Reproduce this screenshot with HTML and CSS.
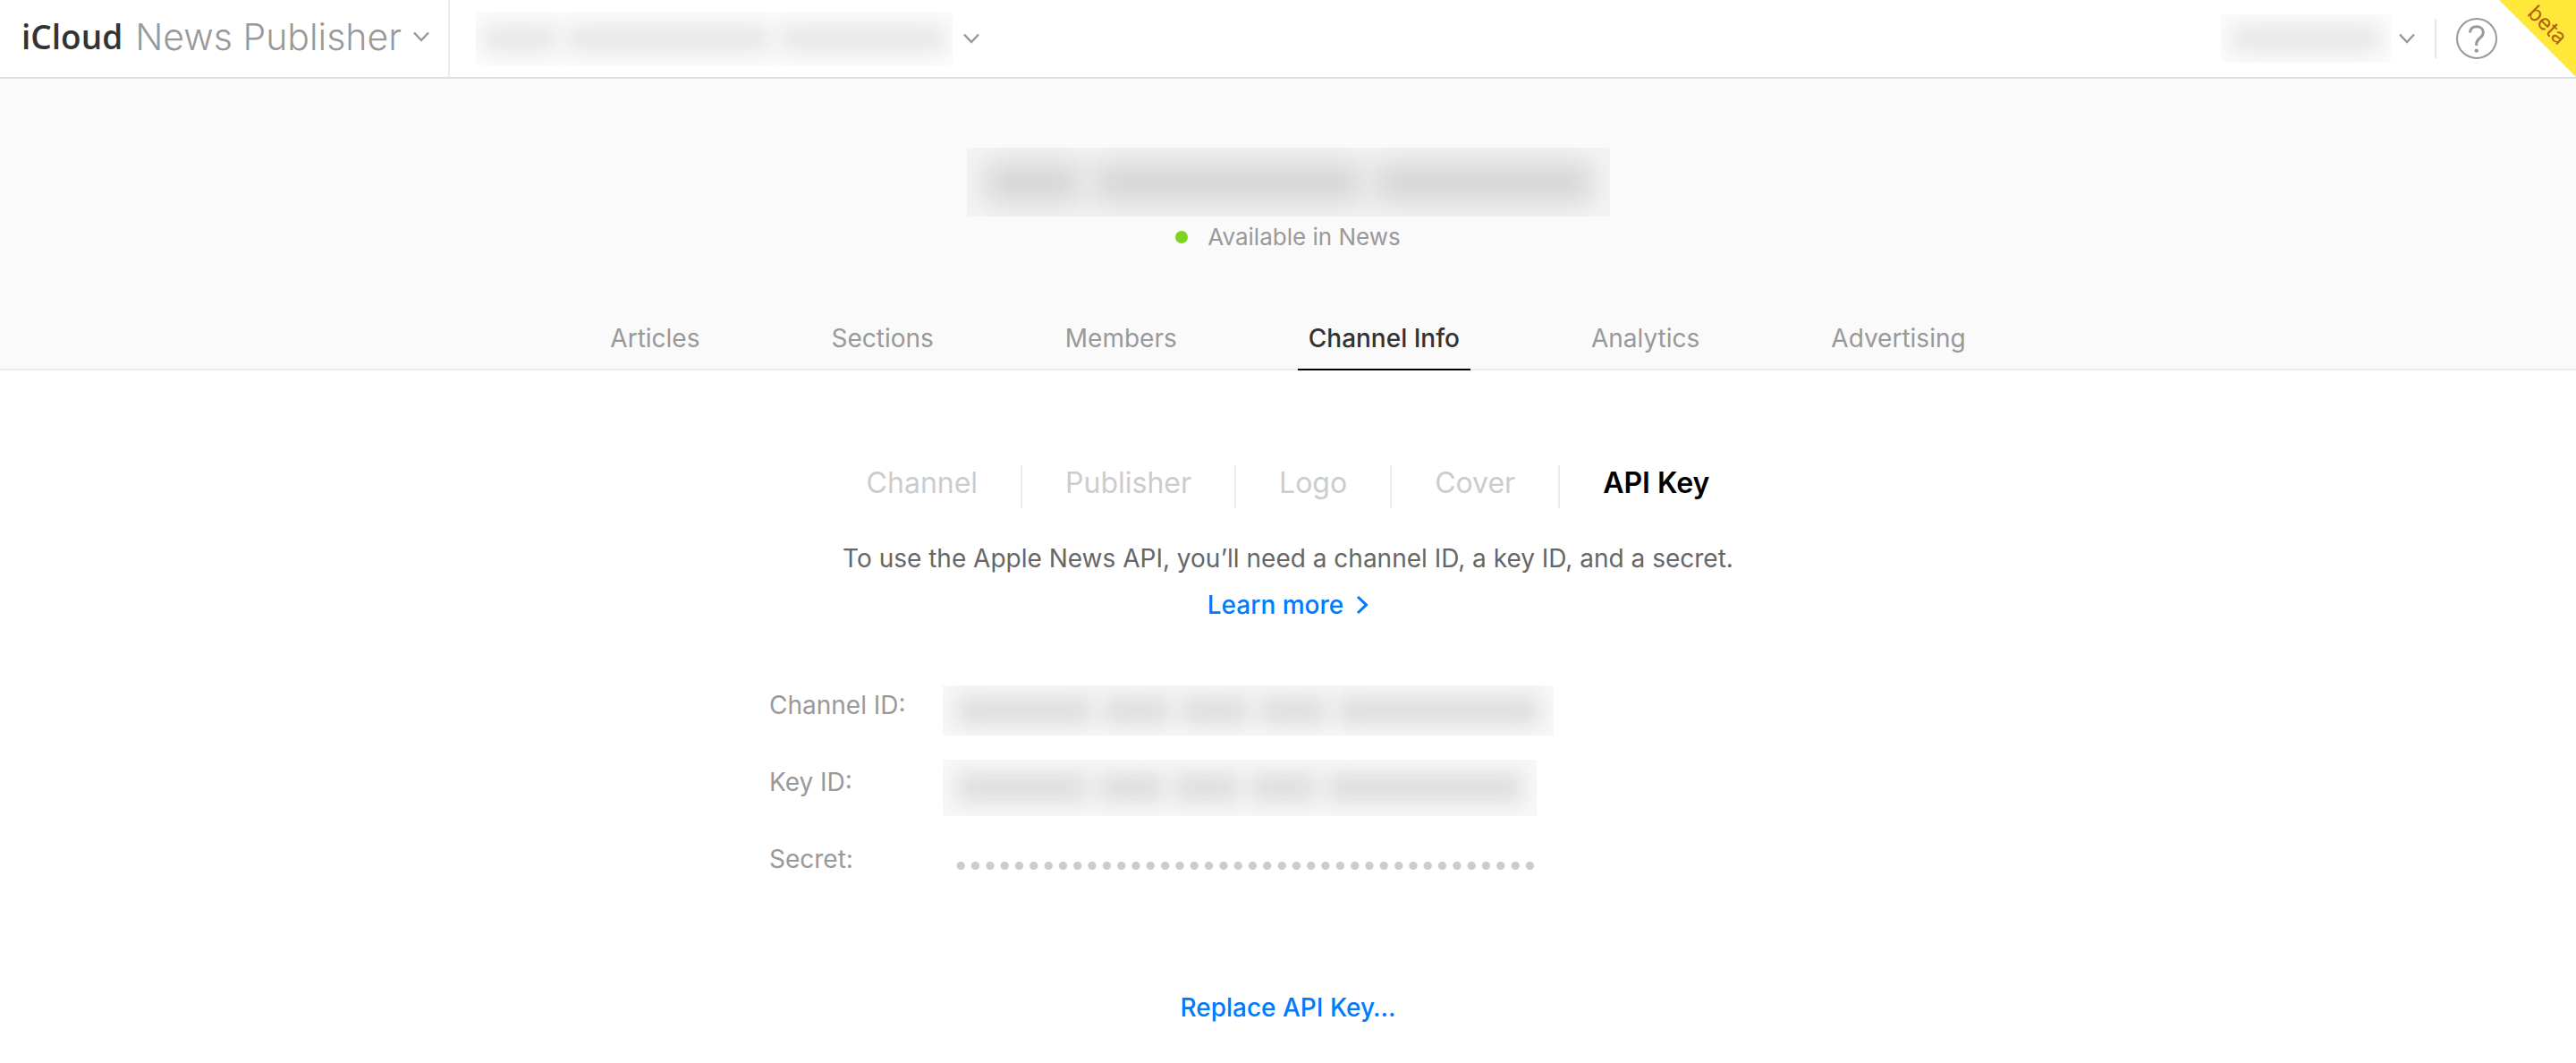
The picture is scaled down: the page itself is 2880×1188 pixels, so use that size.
FILE: index.html
```html
<!DOCTYPE html>
<html lang="en">
<head>
<meta charset="utf-8">
<title>iCloud News Publisher</title>
<link rel="stylesheet" href="styles.css">
</head>
<body>
<header class="topbar">
  <button class="app-switch" type="button">
    <span class="brand">iCloud</span>
    <span class="app-name">News Publisher</span>
    <svg class="chevron" viewBox="0 0 20 12" aria-hidden="true"><path d="M2 1.5 10 10 18 1.5"/></svg>
  </button>
  <button class="channel-switch" type="button" aria-label="Switch channel">
    <span class="redacted redacted-channel"><i class="w4"></i><i class="w11"></i><i class="w9"></i></span>
    <svg class="chevron" viewBox="0 0 20 12" aria-hidden="true"><path d="M2 1.5 10 10 18 1.5"/></svg>
  </button>
  <div class="account">
    <button class="user-menu" type="button" aria-label="Account">
      <span class="redacted redacted-user"><i class="w4"></i></span>
      <svg class="chevron" viewBox="0 0 20 12" aria-hidden="true"><path d="M2 1.5 10 10 18 1.5"/></svg>
    </button>
    <button class="help" type="button" aria-label="Help">
      <svg viewBox="0 0 46 46" aria-hidden="true">
        <circle cx="23" cy="23" r="22"/>
        <path d="M15.5 16.5C15.8 12.2 18.8 9.8 23 9.8c4.200 0 7.300 2.600 7.300 6.400 0 6.500-7.600 6.300-7.600 12.600V31"/>
        <circle class="dot" cx="22.800" cy="36.600" r="2.200"/>
      </svg>
    </button>
  </div>
  <div class="beta"><span>beta</span></div>
</header>

<section class="masthead">
  <div class="redacted redacted-title"><i class="w4"></i><i class="w11"></i><i class="w9"></i></div>
  <p class="status"><span class="status-dot"></span>Available in News</p>
  <nav class="tabs">
    <a href="#articles">Articles</a>
    <a href="#sections">Sections</a>
    <a href="#members">Members</a>
    <a href="#info" class="active" aria-current="page">Channel Info</a>
    <a href="#analytics">Analytics</a>
    <a href="#advertising">Advertising</a>
  </nav>
</section>

<main class="content">
  <nav class="subnav">
    <a href="#channel">Channel</a>
    <a href="#publisher">Publisher</a>
    <a href="#logo">Logo</a>
    <a href="#cover">Cover</a>
    <a href="#api-key" class="active" aria-current="page">API Key</a>
  </nav>
  <p class="intro">To use the Apple News API, you’ll need a channel ID, a key ID, and a secret.</p>
  <a class="action learn" href="#learn">Learn more
    <svg viewBox="0 0 14 22" aria-hidden="true"><path d="M2 2 11.500 11 2 20"/></svg>
  </a>
  <div class="credentials">
    <span class="label">Channel ID:</span>
    <div class="value"><div class="redacted redacted-id"><i class="w8"></i><i class="w4"></i><i class="w4"></i><i class="w4"></i><i class="w12"></i></div></div>
    <span class="label">Key ID:</span>
    <div class="value"><div class="redacted redacted-key"><i class="w8"></i><i class="w4"></i><i class="w4"></i><i class="w4"></i><i class="w12"></i></div></div>
    <label class="label" for="secret">Secret:</label>
    <div class="value"><input class="secret" id="secret" type="password" readonly value="0000000000000000000000000000000000000000"></div>
  </div>
  <button class="action replace" type="button">Replace API Key…</button>
</main>
</body>
</html>
```
FILE: styles.css
```css
* {
  box-sizing: border-box;
}

body {
  margin: 0;
  background: #fff;
  color: #999;
  font-family: Inter, "Liberation Sans", sans-serif;
  font-size: 28px;
  line-height: 36px;
}

button {
  margin: 0;
  padding: 0;
  border: 0;
  background: none;
  color: inherit;
  font: inherit;
}

a {
  color: inherit;
  text-decoration: none;
}

p {
  margin: 0;
}

svg {
  display: block;
  fill: none;
  stroke: #999;
  stroke-width: 2;
}

/* Top bar */
.topbar {
  position: relative;
  display: flex;
  height: 88px;
  border-bottom: 2px solid #e0e0e0;
}

.app-switch {
  display: flex;
  align-items: center;
  padding: 0 20px 4px 24px;
  border-right: 2px solid #ebebeb;
  font-size: 41px;
  line-height: 48px;
}

.brand {
  margin-right: 14px;
  color: #333;
  font-family: "Open Sans", sans-serif;
  font-size: 37px;
  font-weight: 600;
}

.app-name {
  font-weight: 300;
}

.chevron {
  width: 20px;
  height: 12px;
  stroke-width: 2.5;
}

.app-name + .chevron {
  margin-left: 12px;
}

.channel-switch {
  display: flex;
  align-items: center;
  gap: 11px;
  margin-left: 29px;
}

.account {
  display: flex;
  align-items: center;
  margin-left: auto;
  padding-right: 88px;
}

.user-menu {
  display: flex;
  align-items: center;
  gap: 8px;
  height: 44px;
  padding-right: 21px;
  border-right: 2px solid #e8e8e8;
}

.help {
  margin-left: 22px;
}

.help svg {
  width: 46px;
  height: 46px;
}

.help path {
  stroke-width: 3;
}

.help .dot {
  fill: #999;
  stroke: none;
}

.beta {
  position: absolute;
  top: 0;
  right: 0;
  width: 86px;
  height: 86px;
  background: #ffe83a;
  clip-path: polygon(0 0, 100% 0, 100% 100%);
}

.beta span {
  position: absolute;
  top: 12px;
  right: 0;
  width: 64px;
  color: #b3610f;
  font-size: 24px;
  line-height: 32px;
  text-align: center;
  transform: rotate(45deg);
}

/* Blurred-out private values */
.redacted {
  display: flex;
  align-items: center;
  overflow: hidden;
  background: #fcfcfc;
}

.redacted i {
  height: 28px;
  background: #e4e4e4;
  filter: blur(12px);
}

.w4 { flex: 4; }
.w8 { flex: 8; }
.w9 { flex: 9; }
.w11 { flex: 11; }
.w12 { flex: 12; }

.redacted-channel {
  gap: 12px;
  width: 533px;
  height: 60px;
  padding: 0 8px;
}

.redacted-user {
  width: 190px;
  height: 54px;
  padding: 0 12px;
}

.redacted-title {
  gap: 16px;
  width: 719px;
  height: 77px;
  padding: 0 20px;
  background: #f4f4f4;
}

.redacted-title i {
  height: 44px;
  background: #d4d4d4;
  filter: blur(16px);
}

.redacted-id,
.redacted-key {
  gap: 12px;
  width: 683px;
  height: 56px;
  padding: 0 16px;
  background: #f8f8f8;
}

.redacted-id i,
.redacted-key i {
  height: 32px;
  background: #dcdcdc;
  filter: blur(12px);
}

.redacted-key {
  width: 664px;
  height: 63px;
}

/* Masthead */
.masthead {
  display: flex;
  flex-direction: column;
  align-items: center;
  padding-top: 77px;
  border-bottom: 2px solid #ebebeb;
  background: #fafafa;
}

.status {
  display: flex;
  align-items: center;
  gap: 22px;
  margin-top: 5px;
  font-size: 26px;
}

.status-dot {
  width: 14px;
  height: 14px;
  border-radius: 50%;
  background: #7ed321;
}

.tabs {
  display: flex;
  gap: 123px;
  margin: 77px 0 -2px;
}

.tabs a {
  padding: 0 12px 16px;
  border-bottom: 2px solid transparent;
}

.tabs .active {
  border-color: #000;
  color: #333;
  font-weight: 500;
}

/* Content */
.content {
  display: flex;
  flex-direction: column;
  align-items: center;
  padding: 106px 0 32px;
}

.subnav {
  display: flex;
  color: #ccc;
  font-size: 32px;
}

.subnav a {
  height: 48px;
  padding: 2px 48px 0;
}

.subnav a + a {
  border-left: 2px solid #ebebeb;
}

.subnav .active {
  color: #000;
  font-weight: 600;
}

.intro {
  margin-top: 38px;
  color: #666;
}

.action {
  color: #007aff;
  font-weight: 500;
}

.learn {
  display: flex;
  align-items: center;
  gap: 14px;
  margin-top: 16px;
}

.learn svg {
  width: 14px;
  height: 22px;
  stroke: #007aff;
  stroke-width: 3;
}

.credentials {
  display: grid;
  grid-template-columns: 194px 1fr;
  grid-auto-rows: 86px;
  align-items: center;
  width: 1160px;
  max-width: 100%;
  margin-top: 51px;
}

.value {
  padding-top: 12px;
}

.secret {
  width: 100%;
  padding: 0 0 0 12px;
  border: 0;
  outline: 0;
  background: none;
  color: #ccc;
  font: inherit;
  font-size: 29px;
}

.replace {
  margin-top: 105px;
}
```
